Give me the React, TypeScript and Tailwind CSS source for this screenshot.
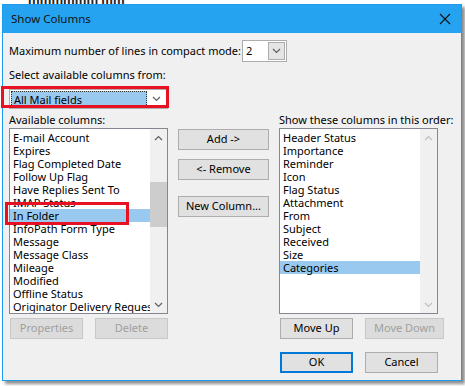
import React from "react";

const available = [
    "E-mail Account",
    "Expires",
    "Flag Completed Date",
    "Follow Up Flag",
    "Have Replies Sent To",
    "IMAP Status",
    "In Folder",
    "InfoPath Form Type",
    "Message",
    "Message Class",
    "Mileage",
    "Modified",
    "Offline Status",
    "Originator Delivery Request",
];

const shown = [
    "Header Status",
    "Importance",
    "Reminder",
    "Icon",
    "Flag Status",
    "Attachment",
    "From",
    "Subject",
    "Received",
    "Size",
    "Categories",
];

const Chevron = ({ up = false, color = "#606060" }: { up?: boolean; color?: string }) => (
    <svg width="9" height="6" viewBox="0 0 9 6">
        <polyline
            points={up ? "1,5 4.5,1.5 8,5" : "1,1 4.5,4.5 8,1"}
            fill="none"
            stroke={color}
            strokeWidth="1.2"
        />
    </svg>
);

const Button = ({
    label,
    w,
    disabled = false,
    primary = false,
}: {
    label: string;
    w: string;
    disabled?: boolean;
    primary?: boolean;
}) => (
    <div
        className={`${w} h-[21px] flex items-center justify-center ${
            disabled
                ? "bg-[#dcdcdc] border border-[#c8c8c8] text-[#a0a0a0]"
                : primary
                ? "bg-[#e1e1e1] border-2 border-[#0078d7] text-black"
                : "bg-[#e1e1e1] border border-[#adadad] text-black"
        }`}
    >
        {label}
    </div>
);

const ListBox = ({
    items,
    selected,
    disabledScroll = false,
}: {
    items: string[];
    selected: string;
    disabledScroll?: boolean;
}) => (
    <div className="w-[159px] h-[186px] border border-[#828790] bg-white flex overflow-hidden">
        <div className="flex-1 pt-[2px] overflow-hidden">
            {items.map((item) => (
                <div
                    key={item}
                    className={`h-[13px] leading-[13px] pl-[3px] whitespace-nowrap ${
                        item === selected ? "bg-[#99c9ef]" : ""
                    }`}
                >
                    {item}
                </div>
            ))}
        </div>
        <div className="w-[17px] bg-[#f0f0f0] flex flex-col items-center">
            <div className="h-[17px] flex items-center justify-center">
                <Chevron up color={disabledScroll ? "#c0c0c0" : "#606060"} />
            </div>
            <div className="flex-1 w-full">
                {!disabledScroll && <div className="mt-[36px] h-[45px] w-full bg-[#cdcdcd]" />}
            </div>
            <div className="h-[17px] flex items-center justify-center">
                <Chevron color={disabledScroll ? "#c0c0c0" : "#606060"} />
            </div>
        </div>
    </div>
);

const App = () => {
    return (
        <div
            className="w-[465px] h-[386px] bg-white overflow-hidden text-[11px] text-black"
            style={{ fontFamily: '"Noto Sans", "Open Sans", sans-serif' }}
        >
            <div className="h-[4px] overflow-hidden pl-[28px]">
                <div className="-mt-[9px] text-[12px] font-bold text-[#222]">mmmmmm mm</div>
            </div>
            <div className="ml-[2px] w-[460px] h-[377px] border border-[#1b9cf0] bg-[#f0f0f0] shadow-[3px_3px_3px_rgba(0,0,0,0.45)] flex flex-col">
                <div className="h-[28px] bg-[#26a3f0] flex items-center justify-between pl-[8px] pr-[10px]">
                    <span className="text-[11.5px] text-[#111]">Show Columns</span>
                    <svg width="12" height="12" viewBox="0 0 12 12">
                        <path d="M1 1 L11 11 M11 1 L1 11" stroke="#111" strokeWidth="1.1" />
                    </svg>
                </div>
                <div className="pl-[6px] pt-[7px] relative">
                    <div className="flex items-center h-[22px]">
                        <span>Maximum number of lines in compact mode:</span>
                        <div className="ml-[1px] w-[45px] h-[22px] border border-[#adadad] bg-white flex items-center justify-between pl-[3px] pr-[1px]">
                            <span>2</span>
                            <div className="w-[17px] h-[18px] bg-[#e5e5e5] border border-[#acacac] flex items-center justify-center">
                                <Chevron />
                            </div>
                        </div>
                    </div>
                    <div className="mt-[5px] h-[16px] leading-[16px]">Select available columns from:</div>
                    <div className="mt-[6px] w-[159px] h-[20px] border border-[#adadad] bg-white flex items-center p-[1px]">
                        <div className="flex-1 h-full bg-[#99c9ef] pl-[2px] leading-[16px] border border-dotted border-[#333]">
                            All Mail fields
                        </div>
                        <div className="w-[19px] h-full flex items-center justify-center">
                            <Chevron />
                        </div>
                    </div>
                    <div className="absolute left-[-2px] top-[53px] w-[168px] h-[22px] border-[3px] border-[#e81123]" />
                    <div className="absolute left-[2px] top-[169px] w-[124px] h-[23px] border-[3px] border-[#e81123]" />
                    <div className="mt-[3px] flex">
                        <div className="flex flex-col">
                            <div className="h-[16px] leading-[16px]">Available columns:</div>
                            <ListBox items={available} selected="In Folder" />
                            <div className="mt-[4px] flex gap-[12px] pl-[1px]">
                                <Button label="Properties" w="w-[73px]" disabled />
                                <Button label="Delete" w="w-[73px]" disabled />
                            </div>
                        </div>
                        <div className="ml-[10px] mt-[17px] flex flex-col">
                            <Button label="Add ->" w="w-[91px]" />
                            <div className="mt-[9px]">
                                <Button label="<- Remove" w="w-[91px]" />
                            </div>
                            <div className="mt-[16px]">
                                <Button label="New Column..." w="w-[91px]" />
                            </div>
                        </div>
                        <div className="ml-[10px] flex flex-col">
                            <div className="h-[16px] leading-[16px] whitespace-nowrap">Show these columns in this order:</div>
                            <ListBox items={shown} selected="Categories" disabledScroll />
                            <div className="mt-[4px] flex gap-[12px] pl-[1px]">
                                <Button label="Move Up" w="w-[73px]" />
                                <Button label="Move Down" w="w-[79px]" disabled />
                            </div>
                            <div className="mt-[13px] flex gap-[12px] pl-[1px]">
                                <Button label="OK" w="w-[73px]" primary />
                                <Button label="Cancel" w="w-[73px]" />
                            </div>
                        </div>
                    </div>
                </div>
            </div>
        </div>
    );
};

export default App;
